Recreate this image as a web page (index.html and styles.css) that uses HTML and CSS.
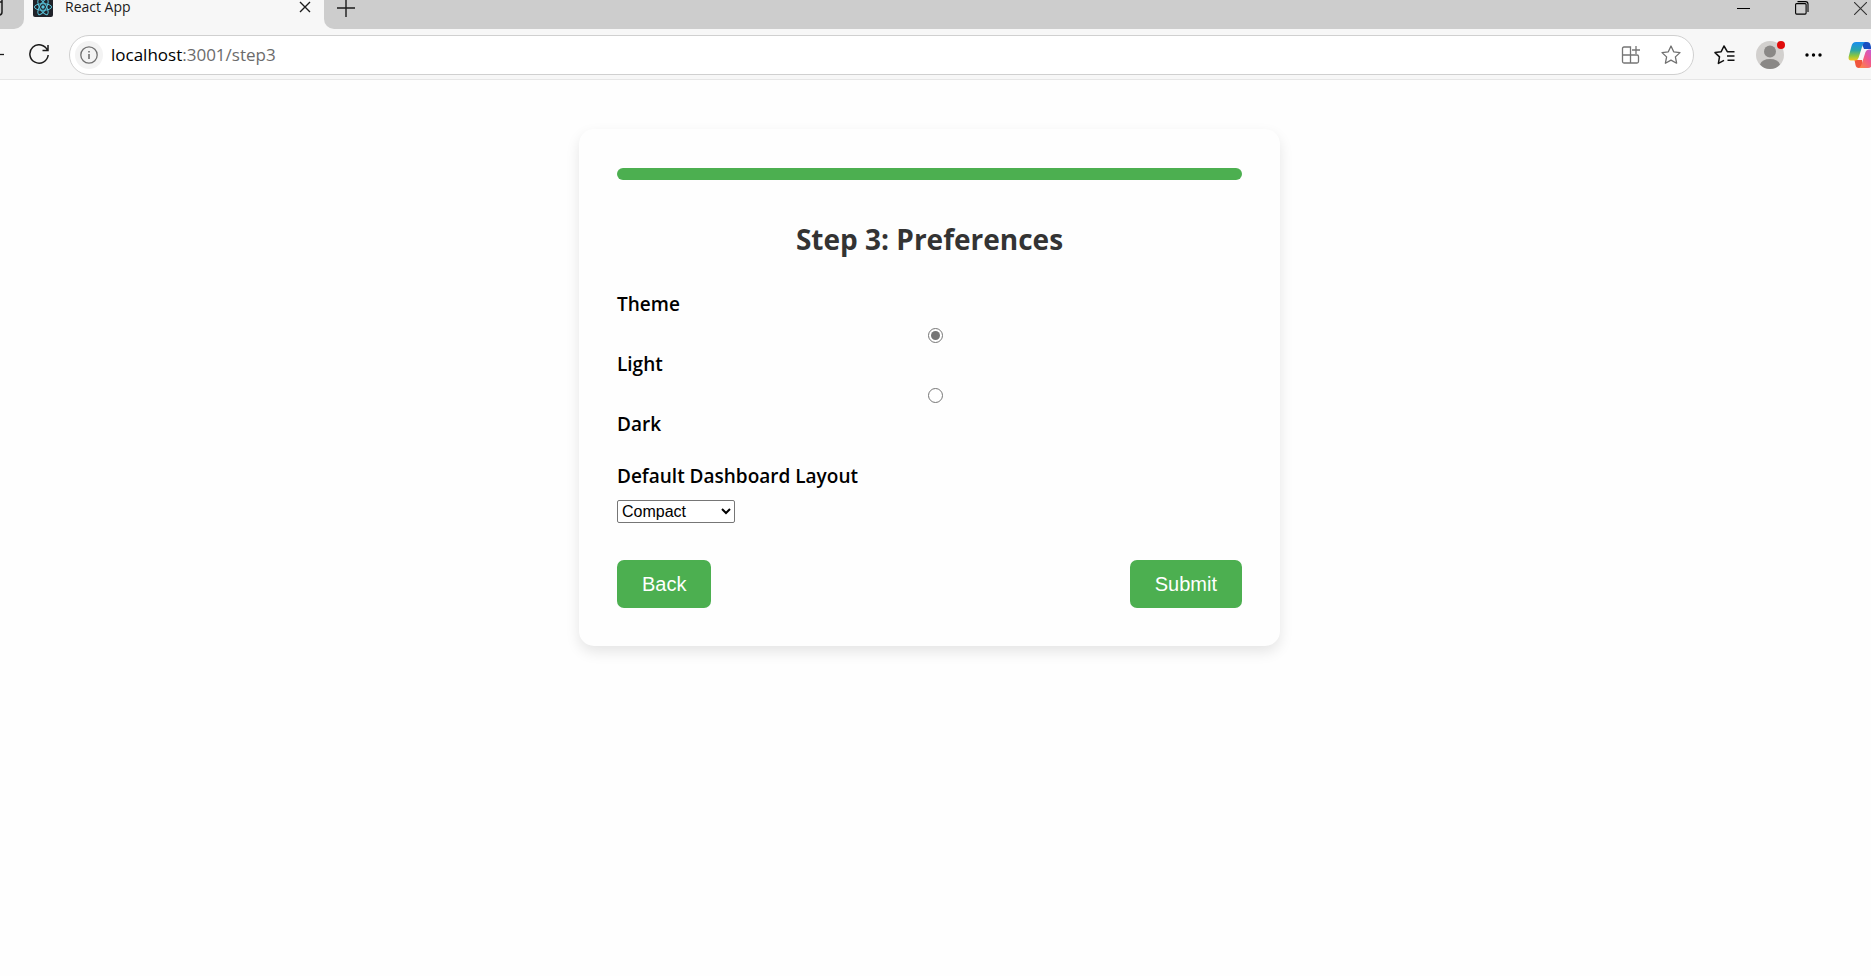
FILE: index.html
```
<!DOCTYPE html>
<html lang="en">
<head>
<meta charset="utf-8">
<title>React App</title>
<link rel="stylesheet" href="styles.css">
</head>
<body>
<header class="browser">
  <div class="tabstrip">
    <div class="tab-prev"><svg width="24" height="29" viewBox="0 0 24 29" fill="none" stroke="#1b1b1b" stroke-width="1.500"><path d="M0 2h2V0v12q0 3-3 3"/></svg></div>
    <div class="tab">
      <svg class="favicon" width="20" height="20" viewBox="0 0 20 20"><rect width="20" height="20" rx="2" fill="#20232a"/><g fill="none" stroke="#58c4dc" stroke-width="1"><ellipse cx="10" cy="10" rx="8.6" ry="3.3"/><ellipse cx="10" cy="10" rx="8.6" ry="3.3" transform="rotate(60 10 10)"/><ellipse cx="10" cy="10" rx="8.6" ry="3.3" transform="rotate(120 10 10)"/></g><circle cx="10" cy="10" r="1.7" fill="#58c4dc"/></svg>
      <span class="tab-title">React App</span>
      <button class="icon-btn" type="button" aria-label="Close tab"><svg width="12" height="12" viewBox="0 0 12 12" stroke="#1b1b1b" stroke-width="1.4"><path d="M1 1l10 10M11 1L1 11"/></svg></button>
    </div>
    <div class="strip-rest">
      <button class="icon-btn" type="button" aria-label="New tab"><svg width="18" height="18" viewBox="0 0 18 18" stroke="#1b1b1b" stroke-width="1.4"><path d="M9 0v18M0 9h18"/></svg></button>
      <div class="window-controls">
        <button class="icon-btn" type="button" aria-label="Minimize"><svg width="13" height="13" viewBox="0 0 13 13" stroke="#000"><path d="M0 6.500h13"/></svg></button>
        <button class="icon-btn" type="button" aria-label="Restore"><svg width="14" height="14" viewBox="0 0 14 14" fill="none" stroke="#000" stroke-width="1.1"><rect x=".6" y="2.600" width="10.500" height="10.500" rx="1"/><path d="M2.500.6h8q2.500 0 2.500 2.500v8"/></svg></button>
        <button class="icon-btn" type="button" aria-label="Close window"><svg width="13" height="13" viewBox="0 0 13 13" stroke="#333" stroke-width="1.1"><path d="M0 0l13 13M13 0L0 13"/></svg></button>
      </div>
    </div>
  </div>
  <div class="toolbar">
    <svg width="4" height="20" viewBox="0 0 4 20" stroke="#1b1b1b" stroke-width="1.300"><path d="M0 9.500h4"/></svg>
    <button class="icon-btn reload" type="button" aria-label="Reload"><svg width="22" height="22" viewBox="0 0 22 22" fill="none" stroke="#1b1b1b" stroke-width="1.500"><path d="M19.500 6.300A9.200 9.200 0 1 0 20.200 11M20 1v5.500h-5.500"/></svg></button>
    <div class="address">
      <button class="icon-btn info" type="button" aria-label="Site information"><svg width="18" height="18" viewBox="0 0 18 18" fill="none" stroke="#707070" stroke-width="1.300"><circle cx="9" cy="9" r="8.200"/><path d="M9 8v5M9 5v1.500" stroke-width="1.600"/></svg></button>
      <a class="url" href="#step3"><span class="host">localhost</span>:3001/step3</a>
      <button class="icon-btn" type="button" aria-label="Apps"><svg width="20" height="20" viewBox="0 0 20 20" fill="none" stroke="#757575" stroke-width="1.300"><path d="M9.500 10V2H3q-1.500 0-1.500 1.500v13Q1.500 18 3 18h13q1.500 0 1.500-1.500v-5q0-1.500-1.500-1.500H1.500M9.500 10v8M15 1v8M11 5h8"/></svg></button>
      <button class="icon-btn" type="button" aria-label="Add to favorites"><svg width="20" height="20" viewBox="0 0 20 20" fill="none" stroke="#707070" stroke-width="1.300" stroke-linejoin="round"><path d="M10 1l2.700 5.800 6.300.8-4.600 4.300 1.200 6.300L10 15.100l-5.600 3.100 1.200-6.300L1 7.600l6.300-.8z"/></svg></button>
    </div>
    <div class="actions">
      <button class="icon-btn" type="button" aria-label="Favorites"><svg width="21" height="20" viewBox="0 0 21 20" fill="none" stroke="#111" stroke-width="1.500" stroke-linejoin="round"><path d="M20.500 6.700h-7.200L10 1 7.200 6.700 1 7.600l4.500 4.300-1.100 6.500 5.600-3M13 11h7.500M13.500 15.200h7"/></svg></button>
      <button class="icon-btn profile" type="button" aria-label="Profile"><svg width="28" height="28" viewBox="0 0 28 28"><circle cx="14" cy="14" r="14" fill="#d2d0ce"/><circle cx="14" cy="10.500" r="6" fill="#8a8886"/><path d="M4 23.500q2-5.500 10-5.500t10 5.500q-4 4.500-10 4.500T4 23.500z" fill="#8a8886"/></svg><span class="badge"></span></button>
      <button class="icon-btn" type="button" aria-label="Settings and more"><svg width="17" height="4" viewBox="0 0 17 4"><circle cx="2" cy="2" r="1.700"/><circle cx="8.500" cy="2" r="1.700"/><circle cx="15" cy="2" r="1.700"/></svg></button>
    </div>
    <button class="icon-btn copilot" type="button" aria-label="Copilot"><svg width="28" height="28" viewBox="0 0 28 28"><defs><linearGradient id="ca" x1="0" y1="0" x2="0" y2="1"><stop offset="0" stop-color="#1a8df0"/><stop offset=".45" stop-color="#2aa7a8"/><stop offset=".75" stop-color="#8cc63f"/><stop offset="1" stop-color="#f2c81e"/></linearGradient><linearGradient id="cb" x1="1" y1="0" x2="0" y2="1"><stop offset="0" stop-color="#b45cf0"/><stop offset=".5" stop-color="#f0588f"/><stop offset="1" stop-color="#ff8a3c"/></linearGradient></defs><path d="M13 1h6q3 0 3.500 3l1 4H16z" fill="#1b4fc0"/><path d="M15 27H11q-3 0-3.500-3l-1-5H14z" fill="#f0553c"/><path d="M8 1h9q-2 1-3 5l-3.500 11q-.8 2.500-3.500 2.500H3q-3 0-2.300-4L3.500 5Q4.500 1 8 1z" fill="url(#ca)"/><path d="M20 27h-9q2-1 3-5l3.500-11q.8-2.500 3.500-2.500h4q3 0 2.300 4L24.500 23q-1 4-4.500 4z" fill="url(#cb)"/></svg></button>
  </div>
</header>
<main class="page">
  <form class="card" onsubmit="return false">
    <div class="progress" role="progressbar" aria-label="Progress" aria-valuenow="100"><div class="progress-fill" style="width:100%"></div></div>
    <h2 class="title">Step 3: Preferences</h2>
    <div class="field" role="radiogroup" aria-labelledby="theme">
      <span class="label" id="theme">Theme</span>
      <label class="option"><input class="radio" type="radio" name="theme" checked><span>Light</span></label>
      <label class="option"><input class="radio" type="radio" name="theme"><span>Dark</span></label>
    </div>
    <div class="field">
      <label class="label" for="layout">Default Dashboard Layout</label>
      <select class="select" id="layout"><option>Compact</option><option>Comfortable</option></select>
    </div>
    <div class="buttons"><button class="btn" type="button">Back</button><button class="btn" type="submit">Submit</button></div>
  </form>
</main>
</body>
</html>
```
FILE: styles.css
```
* { box-sizing: border-box; }
body { margin: 0; background: #fefefe; color: #000; font-family: "Segoe UI", "Open Sans", sans-serif; overflow-x: hidden; }
button { font: inherit; }
.icon-btn { display: flex; align-items: center; justify-content: center; padding: 0; border: 0; background: none; flex: none; }
svg { display: block; flex: none; }

.browser { background: #f7f7f7; border-bottom: 1px solid #e6e6e6; }
.tabstrip { display: flex; height: 29px; }
.tab-prev { width: 24px; background: #cdcdcd; border-bottom-right-radius: 10px; }
.tab { width: 300px; display: flex; align-items: center; padding: 0 13px 15px 9px; }
.tab-title { flex: 1; margin-left: 12px; font-size: 14px; line-height: 14px; color: #1b1b1b; }
.strip-rest { flex: 1; display: flex; align-items: center; justify-content: space-between; padding: 0 4px 13px 13px; background: #cdcdcd; border-bottom-left-radius: 10px; }
.window-controls { display: flex; align-items: center; gap: 45px; }

.toolbar { display: flex; align-items: center; height: 50px; padding-top: 2px; overflow: hidden; }
.reload { margin: 0 19px 0 24px; }
.address { flex: 1; display: flex; align-items: center; gap: 20px; height: 40px; padding: 0 12px 0 5px; background: #fff; border: 1px solid #d0d0d0; border-radius: 20px; }
.info { width: 28px; height: 28px; border-radius: 50%; background: #f3f3f3; }
.url { flex: 1; margin-left: -12px; font-size: 17px; line-height: 24px; color: #6b6b6b; text-decoration: none; }
.host { color: #000; }
.actions { display: flex; align-items: center; gap: 21px; margin: 0 26px 0 20px; }
.profile { position: relative; }
.badge { position: absolute; top: 0; right: -1px; width: 8px; height: 8px; border-radius: 50%; background: #e00b0b; }
.copilot { width: 23px; justify-content: flex-start; overflow: hidden; }

.page { padding: 49px 12px 48px 0; }
.card { max-width: 701px; margin: 0 auto; padding: 39px 38px 38px; background: #fefefe; border-radius: 15px; box-shadow: 0 6px 14px rgba(0, 0, 0, 0.1); }
.progress { height: 12px; border-radius: 6px; background: #e0e0e0; overflow: hidden; }
.progress-fill { height: 100%; background: #4caf50; }
.title { margin: 39px 0 33px; font-size: 28px; line-height: 40px; font-weight: 700; text-align: center; color: #333; }
.field { margin-bottom: 28px; }
.label { display: block; font-size: 19px; line-height: 24px; font-weight: 600; }
.option { display: block; font-size: 19px; line-height: 24px; font-weight: 600; }
.option span { display: block; }
.radio { appearance: none; display: grid; place-items: center; width: 15px; height: 15px; margin: 12px auto 9px; border: 1px solid #767676; border-radius: 50%; background: #fff; }
.option { padding-left: 12px; }
.option span { margin-left: -12px; }
.radio:checked::before { content: ""; width: 9px; height: 9px; border-radius: 50%; background: #767676; }
.select { display: block; width: 118px; height: 23px; margin-top: 12px; padding: 0; border: 1px solid #767676; border-radius: 2px; background: #fff; color: #000; font: 16px "Liberation Sans", Arial, sans-serif; }
.buttons { display: flex; justify-content: space-between; margin-top: 37px; }
.btn { height: 48px; padding: 0 25px; border: 0; border-radius: 7px; background: #4caf50; color: #fff; font: 20px "Liberation Sans", Arial, sans-serif; }
```
